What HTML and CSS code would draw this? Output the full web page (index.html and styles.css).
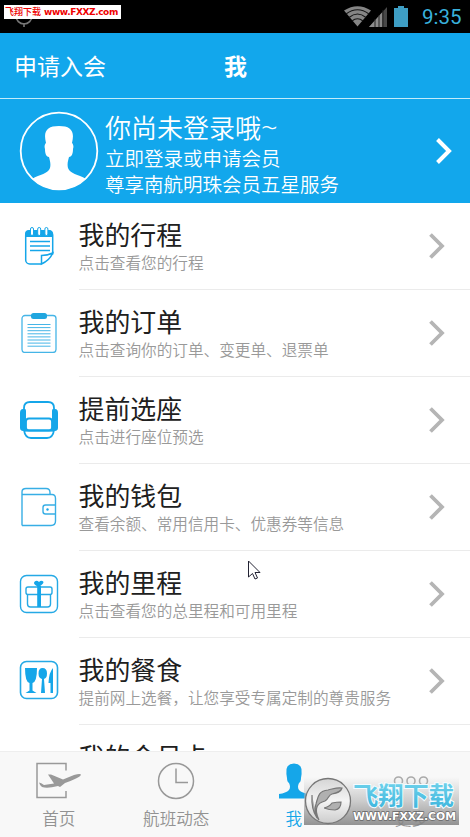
FILE: index.html
```html
<!DOCTYPE html>
<html lang="zh-CN">
<head>
<meta charset="utf-8">
<title>我</title>
<link rel="stylesheet" href="styles.css">
</head>
<body>
<div class="phone">
  <div class="status">
    <svg class="locator" width="20" height="28" viewBox="0 0 20 28"><path d="M2 16a8 8 0 0 0 16 0M10 23v4" fill="none" stroke="#777" stroke-width="1.6"/></svg>
    <div class="promo"><span class="promo-cn">飞翔下载</span><span class="promo-url">www.FXXZ.com</span></div>
    <svg class="signals" width="66" height="22" viewBox="0 0 66 22">
      <path d="M0 4.500Q13.500-4 27 4.500L13.500 20.500Z" fill="#858585"/>
      <g fill="none" stroke="#151515" stroke-width="1.200"><path d="M2 8Q13.500-.5 25 8"/><path d="M5 11.500Q13.500 4.500 22 11.500"/><path d="M8 15Q13.500 10.500 19 15"/></g>
      <path d="M25 21L43 1V21Z" fill="#484848"/><path d="M25 21L38 6.500V21Z" fill="#8b8b8b"/><path d="M31 13V21M35 9V21M39 4V21" stroke="#222" stroke-width="1"/>
      <path d="M54 0h6v2h4v19H50V2h4z" fill="#3e9ec4"/>
    </svg>
    <span class="time">9:35</span>
  </div>
  <header class="header"><span class="join">申请入会</span><b class="page-name">我</b></header>
  <section class="profile">
    <svg class="avatar" width="80" height="80" viewBox="0 0 80 80"><path fill="#fff" d="M13 68c8-5 16-5 18-11 1-4 0-7-1-11-3 0-4-4-4-8-1-3 0-5 1-6-3-12 1-17 13-17s16 5 13 17c1 1 2 3 1 6 0 4-1 8-4 8-1 4-2 7-1 11 2 6 10 6 18 11Q40 90 13 68Z"/><circle cx="40" cy="40" r="38.300" fill="none" stroke="#fff" stroke-width="1.800"/></svg>
    <div class="greeting"><div class="hello">你尚未登录哦<span class="tilde">~</span></div><div class="invite">立即登录或申请会员</div><div class="invite">尊享南航明珠会员五星服务</div></div>
    <svg class="go" width="18" height="28" viewBox="0 0 18 28"><path d="M2.500 2.500L14 14 2.500 25.500"/></svg>
  </section>
  <main class="list">
    <div class="row">
      <svg class="icon" viewBox="0 0 40 40"><rect x="6.700" y="5" width="27" height="33" rx="4" fill="none" stroke="#15a6e9" stroke-width="1.500"/><path d="M6 11V8q0-4 4-4h20q4 0 4 4v3z" fill="#15a6e9"/><g fill="#fff" stroke="#15a6e9"><rect x="11.500" y="1.500" width="3" height="8" rx="1.500"/><rect x="18.700" y="1.500" width="3" height="8" rx="1.500"/><rect x="25.900" y="1.500" width="3" height="8" rx="1.500"/></g><path d="M22 39.500V28.500H35.500V39.500Z" fill="#fff"/><path d="M22.500 38V29.500Q29 29.500 33.700 27 31 34 22.500 38Z" fill="#fff" stroke="#15a6e9" stroke-width="1.500"/><path d="M11 15.500h20M11 20h20M11 24.500h20" stroke="#15a6e9" stroke-width="1.300"/></svg>
      <div class="words"><div class="title">我的行程</div><div class="note">点击查看您的行程</div></div>
      <svg class="arrow" viewBox="0 0 18 28"><path d="M2.500 2.500L14 14 2.500 25.500"/></svg>
    </div>
    <div class="row">
      <svg class="icon" viewBox="0 0 40 40"><rect x="3" y="2.500" width="34" height="37" rx="3" fill="none" stroke="#45b5e7" stroke-width="1.300"/><rect x="12" y="0" width="16" height="6" rx="2.500" fill="#20a6df"/><path d="M8.500 11.500h23M8.500 14.600h23M8.500 17.700h23M8.500 20.800h23M8.500 23.900h23M8.500 27h23M8.500 30.100h23M8.500 33.200h23" stroke="#45b5e7"/></svg>
      <div class="words"><div class="title">我的订单</div><div class="note">点击查询你的订单、变更单、退票单</div></div>
      <svg class="arrow" viewBox="0 0 18 28"><path d="M2.500 2.500L14 14 2.500 25.500"/></svg>
    </div>
    <div class="row">
      <svg class="icon" viewBox="0 0 40 40"><g fill="none" stroke="#15a6e9" stroke-width="1.800"><path d="M5 10V8q0-6 6-6h18q6 0 6 6v2M5 30q1 8 7 8h16q6 0 7-8M6 30.500h28"/><rect x="7" y="18.500" width="26" height="12" rx="3"/></g><path d="M4 9h2q1 0 1 2v18l2 2q-8 1-8-3V13q0-4 3-4M36 9h-2q-1 0-1 2v18l-2 2q8 1 8-3V13q0-4-3-4" fill="#15a6e9"/></svg>
      <div class="words"><div class="title">提前选座</div><div class="note">点击进行座位预选</div></div>
      <svg class="arrow" viewBox="0 0 18 28"><path d="M2.500 2.500L14 14 2.500 25.500"/></svg>
    </div>
    <div class="row">
      <svg class="icon" viewBox="0 0 40 40"><g fill="none" stroke="#37aee5" stroke-width="1.400"><path d="M3 38.500V5q0-3.500 4-3.500h20q4 0 4 4V8M3 7.500h30q3.500 0 3.500 4V34q0 4.500-4.500 4.500H3M36.500 18h-10q-2.500 0-2.500 2.500v4q0 2.500 2.500 2.500h10"/></g><circle cx="28.500" cy="22.500" r="1.200" fill="#15a6e9"/></svg>
      <div class="words"><div class="title">我的钱包</div><div class="note">查看余额、常用信用卡、优惠券等信息</div></div>
      <svg class="arrow" viewBox="0 0 18 28"><path d="M2.500 2.500L14 14 2.500 25.500"/></svg>
    </div>
    <div class="row">
      <svg class="icon" viewBox="0 0 40 40"><g fill="none" stroke="#25a9e5" stroke-width="1.400"><rect x="1.500" y="1.500" width="37" height="37" rx="6"/><rect x="7" y="13" width="26" height="7.500" rx="2"/><path d="M8.500 20.500V30q0 3 3 3h17q3 0 3-3v-9.500"/></g><path d="M18.200 12h3.800v21h-3.800z" fill="#15a6e9"/><path d="M20 13C15 11 14 9 16 7.300q2-1.300 4 .700 2-2 4-.700 2 1.700-4 5.700" fill="#15a6e9"/></svg>
      <div class="words"><div class="title">我的里程</div><div class="note">点击查看您的总里程和可用里程</div></div>
      <svg class="arrow" viewBox="0 0 18 28"><path d="M2.500 2.500L14 14 2.500 25.500"/></svg>
    </div>
    <div class="row">
      <svg class="icon" viewBox="0 0 40 40"><rect x="1.500" y="1.500" width="37" height="37" rx="6" fill="none" stroke="#25a9e5" stroke-width="1.600"/><path d="M6 8h12q0 14-4.500 15v7.500l4 2.500h-11l4-2.500V23Q6 22 6 8M23.500 8q4.500 0 4.500 5.500 0 4.500-3 5.500l1 14h-4l1-14q-3.500-1-3.500-5.500 0-5.500 4-5.500M34 8v25h-2.500V23h-2q.5-11 4.500-15" fill="#15a6e9"/></svg>
      <div class="words"><div class="title">我的餐食</div><div class="note">提前网上选餐，让您享受专属定制的尊贵服务</div></div>
      <svg class="arrow" viewBox="0 0 18 28"><path d="M2.500 2.500L14 14 2.500 25.500"/></svg>
    </div>
    <div class="row">
      <div class="icon"></div>
      <div class="words"><div class="title">我的会员卡</div></div>
    </div>
  </main>
  <nav class="tabs">
    <div class="tab"><svg width="48" height="38" viewBox="0 0 48 38"><path d="M31 8.500V1.500H2V35.500h29V29" fill="none" stroke="#999" stroke-width="1.500"/><path d="M4 20.500q2 0 5 2.500l10-1.500L13 12.500l3 0 12 5 11-4.500q7-2 7 0-2 3-16 8l-5 4-2-1q-11 3-16 1Q5 24 4 20.500" fill="#999"/></svg><span>首页</span></div>
    <div class="tab"><svg width="38" height="38" viewBox="0 0 38 38"><path d="M19 6.500V20.500H31" fill="none" stroke="#999" stroke-width="1.500"/><circle cx="19" cy="19" r="17.500" fill="none" stroke="#999" stroke-width="1.500"/></svg><span>航班动态</span></div>
    <div class="tab active"><svg width="32" height="38" viewBox="0 0 32 38"><path d="M1 36.500V32q7-1 10-4 2-3 0-7-2-1-2-5l-.600-4Q7 1.500 16 1.500T23.600 12l-.600 4q0 4-2 5-2 4 0 7 3 3 10 4v4.500Z" fill="#15a6e9"/></svg><span>我</span></div>
    <div class="tab"><svg width="38" height="38" viewBox="0 0 38 38"><g fill="none" stroke="#aaa" stroke-width="1.600"><circle cx="6.500" cy="19" r="4"/><circle cx="19" cy="19" r="4"/><circle cx="31.500" cy="19" r="4"/></g></svg><span>更多</span></div>
  </nav>
  <div class="stamp">
    <svg class="stamp-logo" width="48" height="48" viewBox="0 0 48 48"><defs><linearGradient id="disc" x2="0" y2="1"><stop stop-color="#d5d5d5"/><stop offset=".5" stop-color="#f4f4f4"/><stop offset="1" stop-color="#ccc"/></linearGradient></defs><circle cx="24" cy="24" r="22.500" fill="url(#disc)" stroke="#777" stroke-width="1.300"/><path d="M15 43C9 30 14 26 21 24c4-2 3-6 7-7 5-1 9-2 10-6-5-1-9 1-14 2C14 14 14 20 12 27q-3 9 3 16M8 18q-1 14 5 23M20 31q5-1 8-5 5-1 9-1 0 7-6 8-6 0-11-2" fill="#b0b0b0" stroke="#777" stroke-width="1.200"/></svg>
    <div class="stamp-words">
      <svg class="stamp-cn" width="106" height="28"><defs><linearGradient id="sky" x2="0" y2="1"><stop stop-color="#7ad8ee"/><stop offset="1" stop-color="#39b3dc"/></linearGradient></defs><text x="1" y="22.500" textLength="101" lengthAdjust="spacingAndGlyphs" fill="url(#sky)">飞翔下载</text></svg>
      <svg class="stamp-url" width="106" height="14"><text x="1" y="11" textLength="103" lengthAdjust="spacingAndGlyphs">WWW.FXXZ.COM</text></svg>
    </div>
  </div>
  <svg class="cursor" width="13" height="20" viewBox="0 0 13 20"><path d="M.5 1v16l4-3.500 2.500 5.500 2.500-1-2.500-5.500h5Z" fill="#fff" stroke="#223" stroke-width="1"/></svg>
</div>
</body>
</html>
```
FILE: styles.css
```css
* { box-sizing: border-box; }
body { margin: 0; font-family: "Noto Sans CJK SC", sans-serif; background: #fff; }
.phone { position: relative; width: 470px; height: 837px; overflow: hidden; display: flex; flex-direction: column; }
.status { position: relative; height: 33px; flex: none; background: #000; display: flex; justify-content: flex-end; align-items: flex-start; padding: 6px 8px 0 0; }
.locator { position: absolute; left: 14px; top: 0; }
.promo { position: absolute; left: 4px; top: 5px; width: 117px; height: 14px; background: #fff; color: #e00; display: flex; align-items: center; gap: 3px; padding-left: 1px; white-space: nowrap; line-height: 14px; }
.promo-cn { font-size: 9px; font-weight: 500; }
.promo-url { font: bold 9px/14px "DejaVu Sans", sans-serif; letter-spacing: -.4px; }
.signals { margin-right: 12px; flex: none; }
.time { font: 20.500px/22px Roboto, sans-serif; color: #39b1dc; width: 40px; white-space: nowrap; }
.header { height: 65px; flex: none; background: #12a7ec; color: #fff; display: grid; grid-template-columns: 1fr auto 1fr; align-items: center; padding: 0 13px 2px 14px; font-size: 23px; line-height: 30px; }
.page-name { font-weight: 700; }
.profile { height: 105.300px; flex: none; background: #12a7ec; border-top: 1px solid #c4ecfa; color: #fff; display: flex; align-items: flex-start; padding: 12px 17px 0 19px; }
.avatar { flex: none; }
.greeting { flex: 1; margin-left: 6px; white-space: nowrap; }
.hello { font-size: 26px; line-height: 31px; padding-bottom: 3px; font-weight: 350; }
.tilde { font-family: "Open Sans", sans-serif; font-size: 29px; line-height: 20px; }
.invite { font-size: 19.500px; line-height: 26px; font-weight: 350; }
.go { margin-top: 26px; }
.go path { fill: none; stroke: #fff; stroke-width: 4; }
.list { flex: 1; min-height: 0; overflow: hidden; }
.row { height: 86.900px; display: flex; padding-left: 19px; }
.icon { width: 40px; height: 40px; margin-top: 22.700px; flex: none; }
.words { flex: 1; height: 86.900px; margin-left: 19.500px; padding-top: 14px; border-bottom: 1px solid #ebebeb; }
.title { font-size: 25.900px; line-height: 33px; color: #202020; white-space: nowrap; }
.note { font-size: 15.630px; line-height: 22px; padding-top: 1.800px; color: #999; white-space: nowrap; font-weight: 350; }
.row:has(.arrow) .words { margin-right: -41px; }
.arrow { width: 18px; height: 28px; margin: 29px 24px 0 -1px; flex: none; }
.arrow path { fill: none; stroke: #b5b5b5; stroke-width: 3.800; }
.tabs { height: 86px; flex: none; background: #f8f8f8; border-top: 1px solid #eee; display: grid; grid-template-columns: repeat(4, 1fr); }
.tab { display: flex; flex-direction: column; align-items: center; padding-top: 10px; color: #929292; font-size: 16.600px; line-height: 24px; font-weight: 350; gap: 6px; }
.active { color: #15a6e9; }
.stamp { position: absolute; left: 304px; top: 777px; width: 155px; height: 48px; display: flex; background: linear-gradient(#c8c8c800, #b6b6b6aa 50%, #808080d8); }
.stamp-logo { flex: none; }
.stamp-words { width: 107px; padding-top: 5px; }
.stamp-cn { display: block; height: 27px; }
.stamp-cn text { font: 700 25px "Noto Sans CJK SC", sans-serif; stroke: #f4fcff; stroke-width: 2px; paint-order: stroke fill; }
.stamp-url { display: block; }
.stamp-url text { font: bold 11px "DejaVu Sans", sans-serif; fill: #fff; stroke: #666; stroke-width: 1.300px; paint-order: stroke fill; }
.cursor { position: absolute; left: 248px; top: 560px; }
```
